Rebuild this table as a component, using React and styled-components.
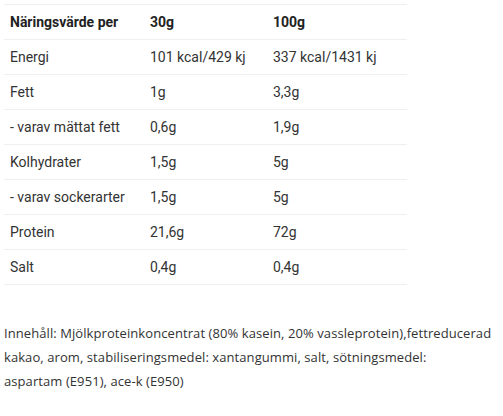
import styled, { createGlobalStyle } from "styled-components"

const GlobalStyle = createGlobalStyle`
    body {
        margin: 0;
        background: #ffffff;
        font-family: Roboto, "Liberation Sans", sans-serif;
    }
`

const rows = [
    ["Energi", "101 kcal/429 kj", "337 kcal/1431 kj"],
    ["Fett", "1g", "3,3g"],
    ["- varav mättat fett", "0,6g", "1,9g"],
    ["Kolhydrater", "1,5g", "5g"],
    ["- varav sockerarter", "1,5g", "5g"],
    ["Protein", "21,6g", "72g"],
    ["Salt", "0,4g", "0,4g"],
]

export default function App() {
    return (
        <Wrapper>
            <GlobalStyle />
            <Table>
                <colgroup>
                    <col style={{ width: 140 }} />
                    <col style={{ width: 123 }} />
                    <col style={{ width: 140 }} />
                </colgroup>
                <thead>
                    <Row>
                        <HeadCell>Näringsvärde per</HeadCell>
                        <HeadCell>30g</HeadCell>
                        <HeadCell>100g</HeadCell>
                    </Row>
                </thead>
                <tbody>
                    {rows.map((r) => (
                        <Row key={r[0]}>
                            <Cell>{r[0]}</Cell>
                            <Cell>{r[1]}</Cell>
                            <Cell>{r[2]}</Cell>
                        </Row>
                    ))}
                </tbody>
            </Table>
            <Ingredients>
                Innehåll: Mjölkproteinkoncentrat (80% kasein, 20% vassleprotein),fettreducerad<br />
                kakao, arom, stabiliseringsmedel: xantangummi, salt, sötningsmedel:<br />
                aspartam (E951), ace-k (E950)
            </Ingredients>
        </Wrapper>
    )
}

const Wrapper = styled.div`
    padding: 4px;
    width: 503px;
    box-sizing: border-box;
`

const Table = styled.table`
    border-collapse: collapse;
    table-layout: fixed;
    width: 403px;
`

const Row = styled.tr`
    height: 35px;
    border-top: 1px solid #efefef;
    border-bottom: 1px solid #efefef;
`

const Cell = styled.td`
    padding: 0 6px;
    font-size: 14px;
    color: #333333;
    white-space: nowrap;
    vertical-align: middle;
`

const HeadCell = styled.th`
    padding: 0 6px;
    font-size: 14px;
    font-weight: 700;
    color: #222222;
    text-align: left;
    white-space: nowrap;
`

const Ingredients = styled.p`
    margin: 36px 0 0;
    font-family: "Open Sans", "Noto Sans", sans-serif;
    font-size: 13px;
    letter-spacing: 0.08px;
    line-height: 24px;
    color: #333333;
    white-space: nowrap;
`
